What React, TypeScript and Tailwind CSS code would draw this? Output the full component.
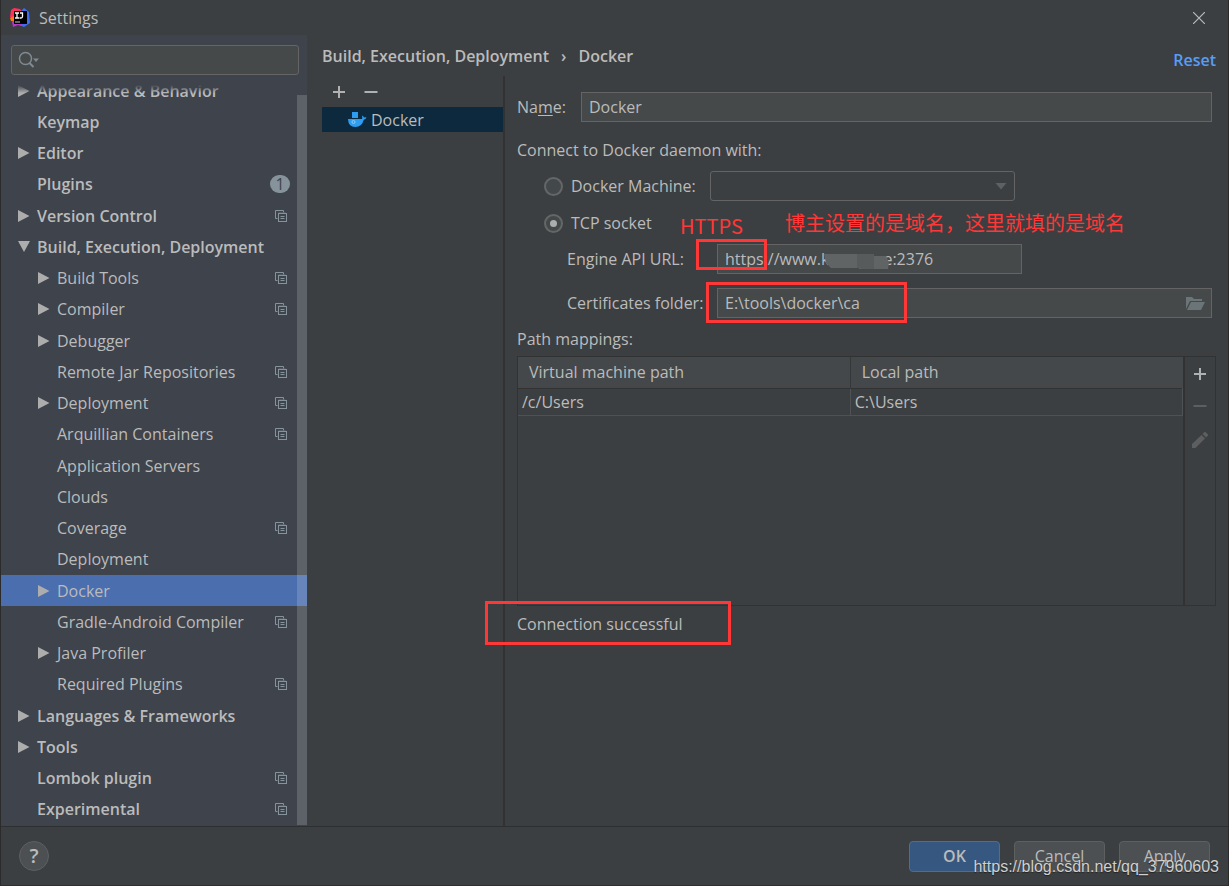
import { useState } from "react";

interface ITreeItem {
  label: string;
  level: 0 | 1;
  arrow?: "right" | "down";
  project?: boolean;
  badge?: number;
}

const treeItems: ITreeItem[] = [
  { label: "Appearance & Behavior", level: 0, arrow: "right" },
  { label: "Keymap", level: 0 },
  { label: "Editor", level: 0, arrow: "right" },
  { label: "Plugins", level: 0, badge: 1 },
  { label: "Version Control", level: 0, arrow: "right", project: true },
  { label: "Build, Execution, Deployment", level: 0, arrow: "down" },
  { label: "Build Tools", level: 1, arrow: "right", project: true },
  { label: "Compiler", level: 1, arrow: "right", project: true },
  { label: "Debugger", level: 1, arrow: "right" },
  { label: "Remote Jar Repositories", level: 1, project: true },
  { label: "Deployment", level: 1, arrow: "right", project: true },
  { label: "Arquillian Containers", level: 1, project: true },
  { label: "Application Servers", level: 1 },
  { label: "Clouds", level: 1 },
  { label: "Coverage", level: 1, project: true },
  { label: "Deployment", level: 1 },
  { label: "Docker", level: 1, arrow: "right" },
  { label: "Gradle-Android Compiler", level: 1, project: true },
  { label: "Java Profiler", level: 1, arrow: "right" },
  { label: "Required Plugins", level: 1, project: true },
  { label: "Languages & Frameworks", level: 0, arrow: "right" },
  { label: "Tools", level: 0, arrow: "right" },
  { label: "Lombok plugin", level: 0, project: true },
  { label: "Experimental", level: 0, project: true },
];

const LogoIcon = () => (
  <svg width="21" height="20" viewBox="0 0 21 20">
    <path d="M1 2 L4 0 L10 1 L12 4 L12 8 L4 12 L0 9 Z" fill="#fe315d" />
    <path d="M0 10 L4 8 L5 14 L1 13 Z" fill="#f97a12" />
    <path d="M11 3 L14 0 L19 4 L20 15 L14 19 L9 17 Z" fill="#3f6df0" />
    <path d="M2 14 L10 14 L13 18 L8 17 L3 19 Z" fill="#b536c9" />
    <rect x="4" y="3" width="13" height="13" fill="#000" />
    <path
      d="M5 5h4M7 5v5M5 10h4M10 5h2.500v3.500q0 1.500-1.500 1.500h-1.500"
      fill="none"
      stroke="#fff"
      strokeWidth="1.300"
    />
    <path d="M5 14h5" stroke="#ccc" strokeWidth="1" />
  </svg>
);

const ProjectIcon = () => (
  <svg width="12" height="12" viewBox="0 0 12 12" fill="none" stroke="#87939a">
    <path d="M2.500 8.500h-2v-8h8v2" />
    <path d="M3.500 10.500v-7.500h7" strokeWidth="1" stroke="#66717a" />
    <rect x="3.500" y="3.500" width="8" height="8" />
    <path d="M5.500 6.500h4M5.500 8.500h4" />
  </svg>
);

const ArrowIcon = ({ direction }: { direction: "right" | "down" }) => (
  <svg width="12" height="12" viewBox="0 0 12 12" fill="#adadad">
    {direction === "right" ? (
      <path d="M0 0 L11.500 6 L0 12 Z" />
    ) : (
      <path d="M0 0 H12 L6 11 Z" />
    )}
  </svg>
);

const DockerIcon = () => (
  <svg width="19" height="17" viewBox="0 0 19 17">
    <path d="M4 1h6v6h-6z" fill="#2e9df0" />
    <path
      d="M0 8h14q0.500-1 0-3.500q1.500 0.500 2 2q1.200-0.500 2.500 0q-0.800 1.800-2.700 2.200q-2 7.300-8.500 7.300q-7 0-7.300-8z"
      fill="#2e9df0"
    />
    <circle cx="5.500" cy="11" r="1.500" fill="none" stroke="#8fcdfb" />
  </svg>
);

const PlusIcon = () => (
  <svg width="14" height="14" viewBox="0 0 14 14" stroke="#afb1b3" strokeWidth="2">
    <path d="M7 1v12M1 7h12" />
  </svg>
);

const MinusIcon = () => (
  <svg width="14" height="14" viewBox="0 0 14 14" stroke="currentColor" strokeWidth="2">
    <path d="M0.500 7h13" />
  </svg>
);

interface ITreeRowProps {
  item: ITreeItem;
  isSelected: boolean;
  onSelect: () => void;
}

const TreeRow: React.FC<ITreeRowProps> = ({ item, isSelected, onSelect }) => (
  <li className="flex flex-1">
    <button
      onClick={onSelect}
      className={`flex w-full items-center pr-5 text-left leading-5 ${
        item.level === 0 ? "pl-[17px] font-semibold" : "pl-[37px]"
      } ${isSelected ? "bg-[#4b6eaf]" : ""}`}
    >
      <span className="w-[19px] shrink-0">
        {item.arrow && <ArrowIcon direction={item.arrow} />}
      </span>
      <span className="flex-1 whitespace-nowrap">{item.label}</span>
      {item.project && <ProjectIcon />}
      {item.badge && (
        <span className="-mr-[3px] flex h-[18px] w-5 items-center justify-center rounded-full bg-[#87939a] font-normal text-[#3e434c]">
          {item.badge}
        </span>
      )}
    </button>
  </li>
);

const Sidebar = () => {
  const [selected, setSelected] = useState(16);

  return (
    <aside className="relative flex w-[306px] shrink-0 flex-col bg-[#3e434c]">
      <div className="relative mx-[10px] mr-2 mt-[10px]">
        <input
          type="text"
          aria-label="Search settings"
          className="block h-[30px] w-full rounded-[3px] border border-[#646464] bg-[#45494a] pl-8 outline-none"
        />
        <svg
          className="absolute left-[7px] top-[6px]"
          width="21"
          height="18"
          viewBox="0 0 21 18"
          fill="none"
          stroke="#7f8b91"
          strokeWidth="1.500"
        >
          <circle cx="7.500" cy="7.500" r="6" />
          <path d="M11.500 12l4 4" strokeWidth="2" />
          <path d="M15 7.500h6l-3 3.500z" fill="#7f8b91" stroke="none" />
        </svg>
      </div>
      <div className="relative mt-[10px] flex flex-1 flex-col overflow-hidden pb-px">
        <ul className="-mt-[10px] flex flex-1 flex-col">
          {treeItems.map((item, index) => (
            <TreeRow
              key={index}
              item={item}
              isSelected={selected === index}
              onSelect={() => setSelected(index)}
            />
          ))}
        </ul>
        <div className="absolute inset-x-0 top-0 h-2 bg-linear-to-b from-[#3e434c] to-transparent" />
        <div className="absolute bottom-px right-0 top-[10px] w-[10px] bg-white/16" />
      </div>
    </aside>
  );
};

const DockerList = () => (
  <div className="w-[181px] shrink-0">
    <div className="flex h-[31px] items-center gap-[18px] pl-[10px] text-[#afb1b3]">
      <button aria-label="Add">
        <PlusIcon />
      </button>
      <button aria-label="Remove">
        <MinusIcon />
      </button>
    </div>
    <button className="flex h-[25px] w-full items-center gap-1 bg-[#0d293e] pl-[26px]">
      <DockerIcon />
      Docker
    </button>
  </div>
);

const fieldClass =
  "block h-[30px] border border-[#646464] bg-[#45494a] px-[7px] outline-none";
const radioClass =
  "flex h-[19px] w-[19px] appearance-none items-center justify-center rounded-full border-2 border-[#646667] bg-[#43494a] checked:before:h-[7px] checked:before:w-[7px] checked:before:rounded-full checked:before:bg-[#adadad]";

const PathMappings = () => (
  <div className="flex h-[250px] border border-[#323232]">
    <div className="flex-1">
      <table className="w-full table-fixed border-collapse text-left">
        <thead>
          <tr className="h-[31px] border-b border-[#323232] bg-[#45484a]">
            <th className="border-r border-[#35383a] pl-[11px] font-normal">
              Virtual machine path
            </th>
            <th className="pl-[11px] font-normal">Local path</th>
          </tr>
        </thead>
        <tbody>
          <tr className="h-[27px] border-b border-[#4f5254]">
            <td className="border-r border-[#4f5254] pl-1">/c/Users</td>
            <td className="border-r border-[#4f5254] pl-1">C:\Users</td>
          </tr>
        </tbody>
      </table>
    </div>
    <div className="flex w-8 flex-col items-center gap-[18px] border-l-2 border-[#323232] pt-[10px] text-[#5c5e5f]">
      <button aria-label="Add mapping">
        <PlusIcon />
      </button>
      <button aria-label="Remove mapping" disabled>
        <MinusIcon />
      </button>
      <button aria-label="Edit mapping" disabled>
        <svg width="18" height="18" viewBox="0 0 18 18" fill="#5c5e5f">
          <path d="M1 17v-4L10.500 4l3.500 3.500L4.500 17z" />
          <path d="M11.500 3l2-2q0.500-0.400 1 0l2.500 2.500q0.500 0.500 0 1l-2 2z" />
        </svg>
      </button>
    </div>
  </div>
);

const ConnectionForm = () => {
  const [mode, setMode] = useState("tcp");

  return (
    <section className="min-w-0 flex-1 border-l-2 border-[#323232] pl-3 pr-3">
      <div className="mr-1 mt-4 flex items-center">
        <label htmlFor="name" className="w-16">
          Na<u className="underline-offset-2">m</u>e:
        </label>
        <input id="name" defaultValue="Docker" className={`${fieldClass} min-w-0 flex-1`} />
      </div>
      <p className="mt-4 leading-6">Connect to Docker daemon with:</p>
      <div className="mt-[9px] flex h-[30px] items-center pl-[27px]">
        <label className="flex w-[166px] items-center gap-2">
          <input
            type="radio"
            name="mode"
            className={radioClass}
            checked={mode === "machine"}
            onChange={() => setMode("machine")}
          />
          Docker Machine:
        </label>
        <div className="relative">
          <select
            aria-label="Docker Machine"
            className="block h-[30px] w-[305px] appearance-none rounded-[3px] border border-[#646464] bg-[#3c3f41]"
          />
          <svg
            className="absolute right-2 top-3"
            width="12"
            height="7"
            viewBox="0 0 12 7"
            fill="#5e6061"
          >
            <path d="M0.500 0h11L6 6.500z" />
          </svg>
        </div>
      </div>
      <div className="relative mt-[7px] flex h-[30px] items-center pl-[27px]">
        <label className="flex items-center gap-2">
          <input
            type="radio"
            name="mode"
            className={radioClass}
            checked={mode === "tcp"}
            onChange={() => setMode("tcp")}
          />
          TCP socket
        </label>
        <span className="absolute left-[163px] top-1 font-['Noto_Sans_CJK_SC',sans-serif] text-xl leading-7 text-[#ff3737]">
          HTTPS
        </span>
        <span className="absolute left-[268px] top-px whitespace-nowrap font-['Noto_Sans_CJK_SC',sans-serif] text-xl leading-7 text-[#ff3737]">
          博主设置的是域名，这里就填的是域名
        </span>
      </div>
      <div className="relative mt-[6px] flex items-center pl-[50px]">
        <label htmlFor="url" className="w-[150px]">
          Engine API URL:
        </label>
        <input
          id="url"
          defaultValue={"https://www.k" + "\u00a0".repeat(13) + "e:2376"}
          className={`${fieldClass} w-[305px]`}
        />
        <svg
          className="absolute left-[307px] top-[10px]"
          width="70"
          height="16"
          viewBox="0 0 70 16"
        >
          <path d="M0 0h50v2h12l3 6-1 7h-29v-1h-28l-5-5z" fill="#606465" />
          <path d="M33 0h17v15h-13v-1h-4z" fill="#575b5c" />
        </svg>
        <div className="absolute -top-[5px] left-[179px] h-[31px] w-[71px] border-3 border-[#ff3737]" />
      </div>
      <div className="relative mr-1 mt-[14px] flex items-center pl-[50px]">
        <label htmlFor="certs" className="w-[150px]">
          Certificates folder:
        </label>
        <input
          id="certs"
          defaultValue={"E:\\tools\\docker\\ca"}
          className={`${fieldClass} min-w-0 flex-1`}
        />
        <button aria-label="Browse" className="absolute right-[7px] top-2">
          <svg width="20" height="15" viewBox="0 0 20 15" fill="#6b7578">
            <path d="M1 13V1h6l2 2h8v2H5z" />
            <path d="M6 6h14l-4 8H2z" />
          </svg>
        </button>
        <div className="absolute -top-[6px] left-[189px] h-[41px] w-[201px] border-3 border-[#ff3737]" />
      </div>
      <p className="mt-[9px] h-[29px] leading-6">Path mappings:</p>
      <PathMappings />
      <div className="relative">
        <p className="pt-[6px] leading-6">Connection successful</p>
        <div className="absolute -left-8 -top-[5px] h-11 w-[246px] border-3 border-[#ff3737]" />
      </div>
    </section>
  );
};

const Footer = () => (
  <footer className="relative flex h-[60px] items-center justify-between border-y border-[#2d2f30] px-[18px]">
    <button
      aria-label="Help"
      className="flex h-[30px] w-[30px] items-center justify-center rounded-full border border-[#5e6060] bg-[#4c5052] text-xl font-semibold"
    >
      ?
    </button>
    <div className="flex gap-[14px]">
      <button className="h-[31px] w-[91px] rounded-[4px] border border-[#4c708c] bg-[#365880] font-semibold">
        OK
      </button>
      <button className="h-[31px] w-[91px] rounded-[4px] border border-[#5e6060] bg-[#4c5052]">
        Cancel
      </button>
      <button className="h-[31px] w-[91px] rounded-[4px] border border-[#5e6060] bg-[#4c5052]">
        Apply
      </button>
    </div>
    <span className="pointer-events-none absolute right-[9px] top-[30px] font-['Liberation_Sans',Arial,sans-serif] text-base leading-5 text-[#d0d0d0] [text-shadow:0_1px_1px_#222]">
      https://blog.csdn.net/qq_37960603
    </span>
  </footer>
);

const App = () => (
  <div className="flex min-h-screen flex-col border-x border-[#2b2b2b] bg-[#3c3f41] font-['Open_Sans','Noto_Sans_CJK_SC',sans-serif] text-base leading-5 text-[#bbbbbb]">
    <header className="flex h-[35px] items-center justify-between pl-[9px] pr-[23px]">
      <h1 className="flex items-center gap-2">
        <LogoIcon />
        Settings
      </h1>
      <button aria-label="Close">
        <svg width="12" height="12" viewBox="0 0 12 12" stroke="#bbbbbb" strokeWidth="1.200">
          <path d="M0 0l12 12M12 0L0 12" />
        </svg>
      </button>
    </header>
    <div className="flex flex-1">
      <Sidebar />
      <main className="flex min-w-0 flex-1 flex-col pl-[15px]">
        <div className="flex h-[41px] items-center justify-between pr-3 font-semibold">
          <nav aria-label="Breadcrumb" className="flex gap-3">
            <span>Build, Execution, Deployment</span>
            <span>›</span>
            <span>Docker</span>
          </nav>
          <a href="#reset" className="pt-2 text-[#589df6]">
            Reset
          </a>
        </div>
        <div className="flex flex-1">
          <DockerList />
          <ConnectionForm />
        </div>
      </main>
    </div>
    <Footer />
  </div>
);

export default App;
